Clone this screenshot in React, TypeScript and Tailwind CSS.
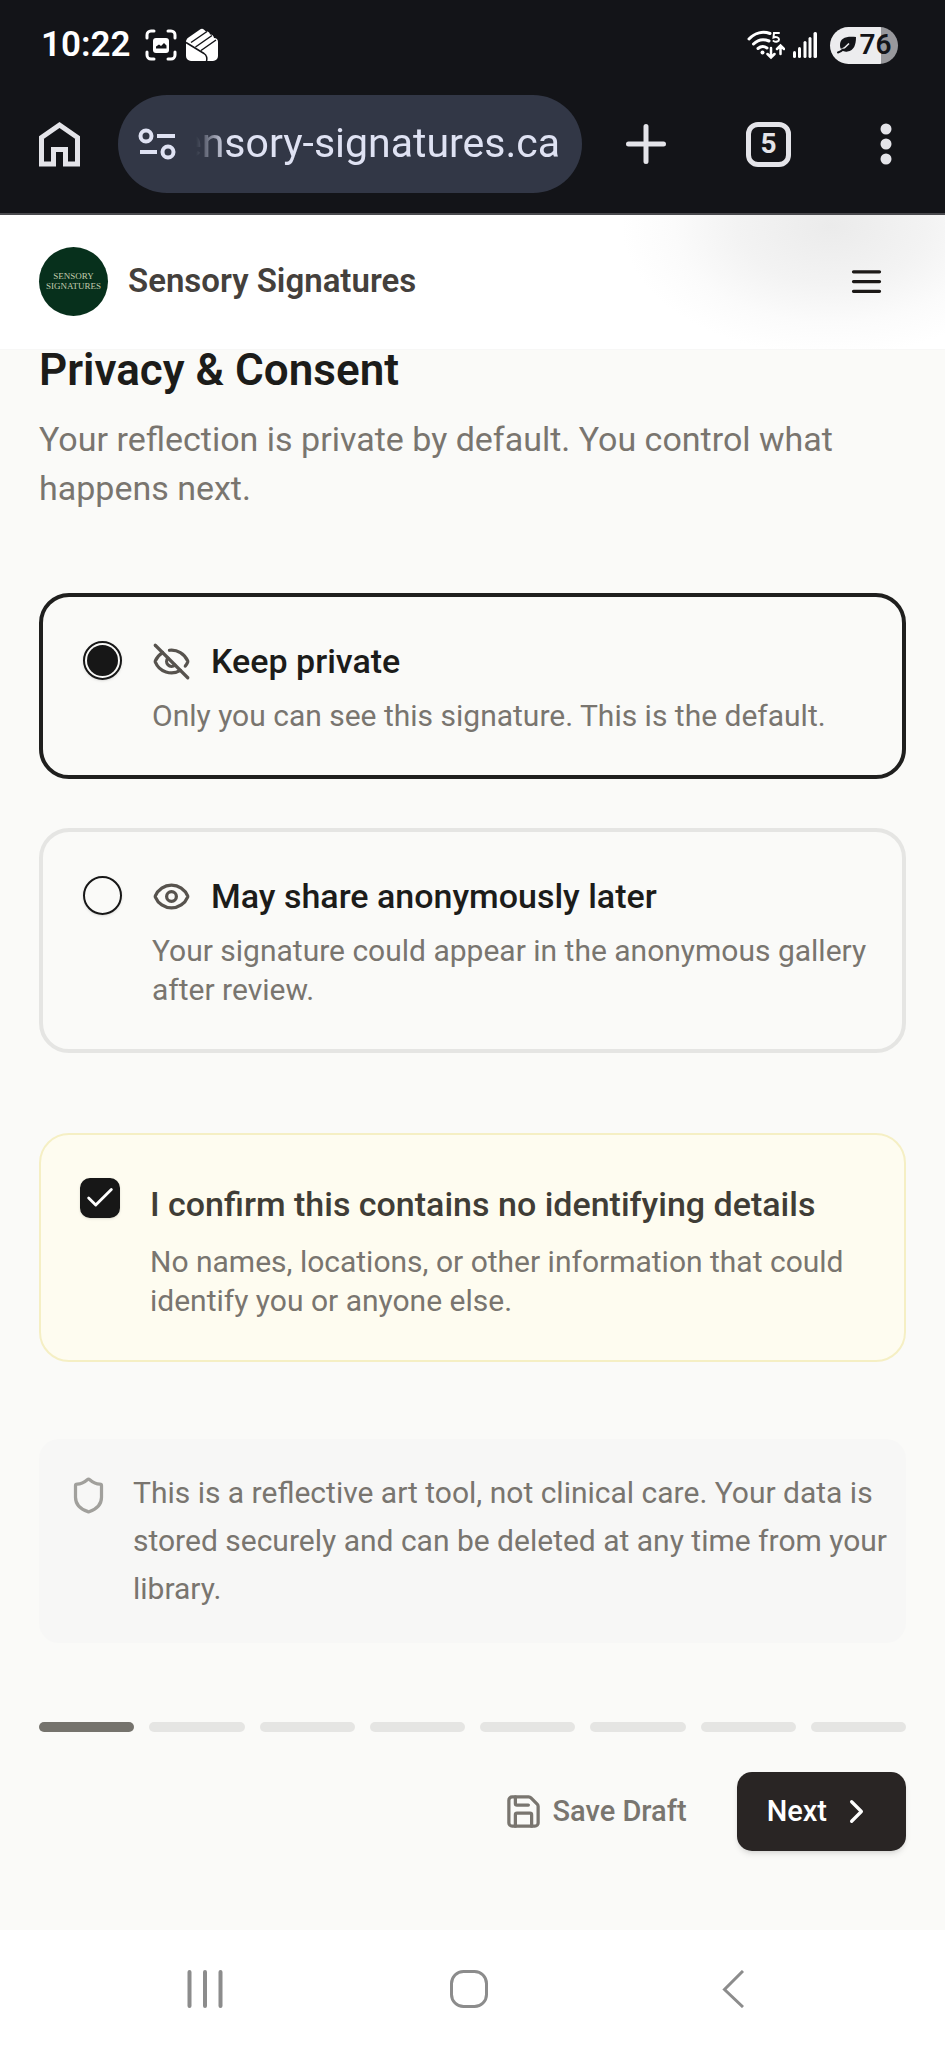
import { useState } from "react";
import { Check, ChevronRight, Eye, EyeOff, Save, Shield, type LucideIcon } from "lucide-react";

type Sharing = "private" | "anonymous";

interface SharingOption {
  value: Sharing;
  title: string;
  description: string;
  icon: LucideIcon;
}

const SHARING_OPTIONS: SharingOption[] = [
  {
    value: "private",
    title: "Keep private",
    description: "Only you can see this signature. This is the default.",
    icon: EyeOff,
  },
  {
    value: "anonymous",
    title: "May share anonymously later",
    description: "Your signature could appear in the anonymous gallery after review.",
    icon: Eye,
  },
];

const STEP_COUNT = 8;

function StatusBar() {
  return (
    <div className="flex h-[90px] items-center justify-between pr-[47px] pl-[41px] text-white">
      <div className="flex items-center">
        <span className="text-[35px] font-semibold">10:22</span>
        <svg className="ml-[14px] h-8 w-8" viewBox="0 0 32 32" fill="none">
          <path
            d="M2 9V6a4 4 0 0 1 4-4h3M23 2h3a4 4 0 0 1 4 4v3M30 23v3a4 4 0 0 1-4 4h-3M9 30H6a4 4 0 0 1-4-4v-3"
            stroke="currentColor"
            strokeWidth="3"
            strokeLinecap="round"
          />
          <rect x="8" y="9" width="16" height="15" rx="3" fill="currentColor" />
          <path d="M11 19.500v-2l3-2 2 1.500 3-3 2.500 2.500v3z" fill="#131418" />
        </svg>
        <svg className="ml-2 h-[34px] w-[34px]" viewBox="0 0 34 34">
          <path
            d="M1 14c0-2 1-3.500 2.500-4.500L15 1.500c1.500-1 3-.8 4 .3l2 1.700c1.500-.3 3 .3 3.500 1.500l.5 1.500c1.500-.3 3 .5 3.500 2l.5 1.500c2.500 0 4 1.500 4 4v14a5 5 0 0 1-5 5H6a5 5 0 0 1-5-5z"
            fill="currentColor"
          />
          <path
            d="M6 14.500L22 3.500M10.500 19L27 7.500M16 22.500L31 12M1 14.500l18 11c3 2 3.500 4 2.500 8"
            stroke="#131418"
            strokeWidth="1.500"
            fill="none"
          />
        </svg>
      </div>

      <div className="flex items-center">
        <svg className="h-[30px] w-[38px]" viewBox="0 0 38 30" fill="none" stroke="currentColor" strokeLinecap="round">
          <path d="M2 9C8 2.500 16 1 23 3.500" strokeWidth="3" />
          <path d="M6.500 14C11 9.500 16 8.500 22 11" strokeWidth="3" />
          <path d="M11 18.500c3-2.500 6-2.500 9-.5" strokeWidth="3" />
          <circle cx="15.500" cy="22.500" r="2" fill="currentColor" stroke="none" />
          <path d="M24 18v8M20.500 24L24 27.500l3.500-3.500M33.500 24v-7M30 19l3.500-3.500L37 19" strokeWidth="2.500" />
          <path d="M32 3h-5l-.5 4.500c3-1 5.500 0 5.500 2s-3 3-5.500 1.500" strokeWidth="2" />
        </svg>
        <svg className="ml-2 h-[26px] w-[25px]" viewBox="0 0 25 26" fill="currentColor">
          <rect x="0" y="19" width="3" height="7" rx="1.500" />
          <rect x="5" y="15" width="3" height="11" rx="1.500" />
          <rect x="10.500" y="9" width="3" height="17" rx="1.500" />
          <rect x="15.500" y="5" width="3" height="21" rx="1.500" />
          <rect x="20.500" y="0" width="3.500" height="26" rx="1.500" />
        </svg>
        <div className="ml-3 flex h-[37px] w-[68px] items-center justify-center gap-[3px] rounded-full bg-linear-to-r from-[#ececee] from-75% to-[#98989c] to-75% text-[#131418]">
          <svg className="h-[18px] w-5" viewBox="0 0 20 18">
            <path d="M19 1C9 0 3 2 3 9c0 2 .5 3.500 1.500 5 2 1.500 4 2 6 1.500C17 14.500 19 9 19 1z" fill="currentColor" />
            <path d="M12 7.500C9 11 6 13 3.500 14" stroke="#ececee" strokeWidth="1.500" fill="none" />
            <path d="M1 16.500c2-.5 3.500-1.500 5-3" stroke="currentColor" strokeWidth="2" strokeLinecap="round" fill="none" />
          </svg>
          <span className="text-[28px] leading-8 font-semibold">76</span>
        </div>
      </div>
    </div>
  );
}

function BrowserToolbar() {
  return (
    <div className="flex items-center border-b-2 border-[#4a4a4e] pt-[5px] pr-[47px] pb-5 pl-[39px] text-[#e4e4e9]">
      <button aria-label="Home" className="shrink-0">
        <svg className="h-[46px] w-[41px]" viewBox="0 0 41 46" fill="none" stroke="currentColor" strokeWidth="5">
          <path d="M2.500 43V16.500L20.500 4l18 12.500V43H26.500V28.500h-12V43z" />
        </svg>
      </button>

      <div className="ml-[38px] flex h-[98px] min-w-0 flex-1 items-center rounded-full bg-[#323746] pr-[22px] pl-5">
        <svg className="h-8 w-[38px] shrink-0 text-[#dfe2f3]" viewBox="0 0 38 32" fill="none" stroke="currentColor" strokeWidth="4">
          <circle cx="8" cy="8" r="5.500" />
          <path d="M19 8h18M2 24h17" />
          <circle cx="30" cy="24" r="5.500" />
        </svg>
        <input
          dir="rtl"
          aria-label="Address"
          readOnly
          value="sensory-signatures.ca"
          className="ml-5 h-14 min-w-0 flex-1 bg-transparent text-[41px] text-[#dfe2f3] outline-none [mask-image:linear-gradient(to_right,transparent,black_32px)]"
        />
      </div>

      <button aria-label="New tab" className="ml-11 shrink-0">
        <svg className="h-10 w-10" viewBox="0 0 40 40" stroke="currentColor" strokeWidth="5" strokeLinecap="round">
          <path d="M20 2.500v35M2.500 20h35" />
        </svg>
      </button>
      <button
        aria-label="5 open tabs"
        className="ml-20 flex h-[45px] w-[45px] shrink-0 items-center justify-center rounded-xl border-[5px] border-current text-[28px] leading-8 font-bold"
      >
        5
      </button>
      <button aria-label="Browser menu" className="ml-[83px] flex w-6 shrink-0 justify-center">
        <svg className="h-[42px] w-3" viewBox="0 0 12 42" fill="currentColor">
          <circle cx="6" cy="6" r="5.500" />
          <circle cx="6" cy="21" r="5.500" />
          <circle cx="6" cy="36" r="5.500" />
        </svg>
      </button>
    </div>
  );
}

function SiteHeader() {
  return (
    <header className="flex h-[135px] items-center justify-between border-b border-[#f7f7f6] bg-white bg-[radial-gradient(ellipse_210px_130px_at_88%_8%,#ebebeb,#f3f3f3_45%,#fbfbfb_75%,#ffffff)] px-[39px] pb-0.5">
      <a href="#" className="flex items-center gap-5">
        <span className="flex h-[69px] w-[69px] flex-col items-center justify-center rounded-full bg-[#07301c] font-['Liberation_Serif',serif] text-[9px] leading-[10px] text-[#c3ccae]">
          <span>SENSORY</span>
          <span>SIGNATURES</span>
        </span>
        <span className="text-[33px] font-semibold text-[#44403c]">Sensory Signatures</span>
      </a>
      <button aria-label="Open menu" className="px-5 text-[#1c1917]">
        <svg className="h-[39px] w-[39px]" viewBox="0 0 24 24" stroke="currentColor" strokeWidth="2" strokeLinecap="round">
          <path d="M4 6h16M4 12h16M4 18h16" />
        </svg>
      </button>
    </header>
  );
}

function SystemNav() {
  return (
    <nav className="grid grid-cols-3 items-center bg-white py-10 pr-20 pl-[73px] text-[#8c8c8c]">
      <button aria-label="Recent apps" className="flex justify-center">
        <svg className="h-[38px] w-9" viewBox="0 0 36 38" stroke="currentColor" strokeWidth="4" strokeLinecap="round">
          <path d="M2.500 2v34M18 2v34M33.500 2v34" />
        </svg>
      </button>
      <button aria-label="Home screen" className="flex justify-center">
        <svg className="h-[38px] w-[38px]" viewBox="0 0 38 38" fill="none" stroke="currentColor" strokeWidth="3">
          <rect x="1.500" y="1.500" width="35" height="35" rx="12" />
        </svg>
      </button>
      <button aria-label="Back" className="flex justify-center">
        <svg className="h-[38px] w-[22px]" viewBox="0 0 22 38" fill="none" stroke="currentColor" strokeWidth="3">
          <path d="M21 1L2.500 19.500 21 37" />
        </svg>
      </button>
    </nav>
  );
}

export default function App() {
  const [sharing, setSharing] = useState<Sharing>("private");
  const [confirmed, setConfirmed] = useState(true);
  const [step, setStep] = useState(0);

  return (
    <div className="flex min-h-screen flex-col bg-[#fafaf8] font-['Roboto',sans-serif]">
      <div className="bg-[#131418]">
        <StatusBar />
        <BrowserToolbar />
      </div>
      <SiteHeader />

      <main className="flex-1 px-[39px] pb-[79px]">
        <h1 className="text-[44px] leading-10 font-semibold text-[#1c1c1a]">Privacy &amp; Consent</h1>
        <p className="mt-[25px] text-[34px] leading-[49px] text-[#79756f]">
          Your reflection is private by default. You control what happens next.
        </p>

        {/* Sharing choice */}
        <div role="radiogroup" aria-label="Sharing" className="mt-20 flex flex-col gap-[49px]">
          {SHARING_OPTIONS.map(({ value, title, description, icon: Icon }) => (
            <label
              key={value}
              className="flex cursor-pointer items-start gap-[30px] rounded-[30px] border-4 border-[#e5e5e3] py-10 pr-[30px] pl-10 has-checked:border-[#1f1f1e]"
            >
              <input
                type="radio"
                name="sharing"
                value={value}
                checked={sharing === value}
                onChange={() => setSharing(value)}
                className="mt-1 h-[39px] w-[39px] shrink-0 appearance-none rounded-full border-2 border-[#171717] bg-clip-content p-[2px] shadow-sm checked:bg-[#171717]"
              />
              <span className="flex-1">
                <span className="flex items-center gap-5 text-[34px] leading-[49px] font-medium text-[#1c1c1a]">
                  <Icon className="h-[39px] w-[39px] shrink-0 text-[#57534e]" />
                  {title}
                </span>
                <span className="mt-[10px] block text-[30px] leading-[39px] text-[#79756f]">{description}</span>
              </span>
            </label>
          ))}
        </div>

        {/* Confirmation */}
        <label className="mt-20 flex cursor-pointer items-start gap-[30px] rounded-[30px] border-2 border-[#f5efc4] bg-[#fefcf0] py-10 pr-[30px] pl-[39px]">
          <span className="relative mt-[3px] h-10 w-10 shrink-0">
            <input
              type="checkbox"
              checked={confirmed}
              onChange={(e) => setConfirmed(e.target.checked)}
              className="block h-10 w-10 appearance-none rounded-[10px] border-2 border-[#171717] shadow-sm checked:bg-[#171717]"
            />
            {confirmed && (
              <Check className="pointer-events-none absolute top-[3px] left-[3px] h-[34px] w-[34px] text-white" />
            )}
          </span>
          <span className="flex-1">
            <span className="block text-[34px] leading-[59px] font-medium text-[#403d36]">
              I confirm this contains no identifying details
            </span>
            <span className="mt-2 block text-[30px] leading-[39px] text-[#79756f]">
              No names, locations, or other information that could identify you or anyone else.
            </span>
          </span>
        </label>

        {/* Disclaimer */}
        <div className="mt-[77px] flex items-start gap-[25px] rounded-[20px] bg-[#f7f7f6] py-[30px] pr-3 pl-[30px]">
          <Shield className="mt-[7px] h-[39px] w-[39px] shrink-0 text-[#a1a09c]" />
          <p className="text-[30px] leading-[48px] text-[#79756f]">
            This is a reflective art tool, not clinical care. Your data is stored securely and can be deleted at any
            time from your library.
          </p>
        </div>

        {/* Step progress */}
        <div className="mt-[79px] flex gap-[15px]">
          {Array.from({ length: STEP_COUNT }, (_, i) => (
            <div key={i} className={i <= step ? "h-[10px] flex-1 rounded-full bg-[#75736d]" : "h-[10px] flex-1 rounded-full bg-[#e5e5e3]"} />
          ))}
        </div>

        <div className="mt-10 flex items-center justify-end gap-5">
          <button className="flex h-[79px] items-center gap-[10px] px-[30px] text-[29px] font-medium text-[#79756f]">
            <Save className="h-[39px] w-[39px]" />
            Save Draft
          </button>
          <button
            onClick={() => setStep(Math.min(step + 1, STEP_COUNT - 1))}
            className="flex h-[79px] items-center gap-[10px] rounded-[15px] bg-[#292524] px-[30px] text-[29px] font-medium text-white shadow-md"
          >
            Next
            <ChevronRight className="h-[39px] w-[39px]" />
          </button>
        </div>
      </main>

      <SystemNav />
    </div>
  );
}
